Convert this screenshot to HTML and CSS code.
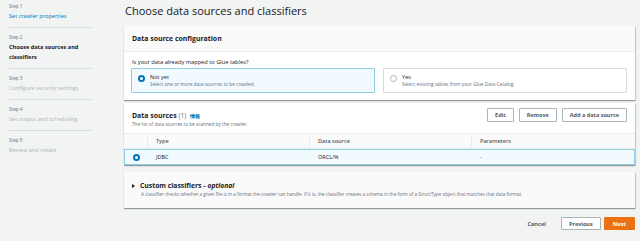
FILE: index.html
```html
<!DOCTYPE html>
<html lang="en">
<head>
  <meta charset="UTF-8" />
  <title>Add crawler | AWS Glue</title>
  <link rel="stylesheet" href="styles.css">
</head>
<body>
  <div class="page">
    <nav class="steps">
      <div class="step first">
        <div class="step-label">Step 1</div>
        <a class="step-name link" href="#">Set crawler properties</a>
      </div>
      <div class="step">
        <div class="step-label">Step 2</div>
        <div class="step-name current">Choose data sources and classifiers</div>
      </div>
      <div class="step">
        <div class="step-label">Step 3</div>
        <div class="step-name">Configure security settings</div>
      </div>
      <div class="step">
        <div class="step-label">Step 4</div>
        <div class="step-name">Set output and scheduling</div>
      </div>
      <div class="step last">
        <div class="step-label">Step 5</div>
        <div class="step-name">Review and create</div>
      </div>
    </nav>

    <main class="content">
      <h1>Choose data sources and classifiers</h1>

      <section class="card">
        <div class="card-header">
          <h2>Data source configuration</h2>
        </div>
        <div class="card-body">
          <div class="field-label">Is your data already mapped to Glue tables?</div>
          <div class="tiles">
            <div class="tile selected">
              <span class="radio on"></span>
              <div>
                <div class="tile-title">Not yet</div>
                <div class="tile-desc">Select one or more data sources to be crawled.</div>
              </div>
            </div>
            <div class="tile">
              <span class="radio"></span>
              <div>
                <div class="tile-title">Yes</div>
                <div class="tile-desc">Select existing tables from your Glue Data Catalog.</div>
              </div>
            </div>
          </div>
        </div>
      </section>

      <section class="card">
        <div class="card-header table-head">
          <div>
            <h2>Data sources <span class="count">(1)</span> <a class="info" href="#">情報</a></h2>
            <div class="header-desc">The list of data sources to be scanned by the crawler.</div>
          </div>
          <div class="actions">
            <button class="btn">Edit</button>
            <button class="btn">Remove</button>
            <button class="btn">Add a data source</button>
          </div>
        </div>
        <div class="table">
          <div class="row head">
            <div class="cell sel"></div>
            <div class="cell type">Type</div>
            <div class="cell src">Data source</div>
            <div class="cell params">Parameters</div>
          </div>
          <div class="row picked">
            <div class="cell sel"><span class="radio on"></span></div>
            <div class="cell type">JDBC</div>
            <div class="cell src">ORCL/%</div>
            <div class="cell params">-</div>
          </div>
        </div>
      </section>

      <section class="card expand">
        <div class="expand-title"><span class="caret"></span>Custom classifiers - <em>optional</em></div>
        <div class="expand-desc">A classifier checks whether a given file is in a format the crawler can handle. If it is, the classifier creates a schema in the form of a StructType object that matches that data format.</div>
      </section>

      <div class="footer">
        <a class="cancel" href="#">Cancel</a>
        <button class="btn">Previous</button>
        <button class="btn primary">Next</button>
      </div>
    </main>
  </div>
</body>
</html>
```

FILE: styles.css
```css
body {
  margin: 0;
  background-color: #f2f3f3;
  font-family: "Open Sans", "Noto Sans", sans-serif;
  color: #16191f;
}

.page {
  display: flex;
  height: 241px;
}

.steps {
  width: 117px;
  flex-shrink: 0;
  padding-left: 9px;
  box-sizing: border-box;
}

.step {
  width: 82px;
  padding: 6px 0 6px;
  border-bottom: 1px solid #d5dbdb;
}

.step.first {
  padding-top: 3px;
}

.step.last {
  border-bottom: none;
}

.step-label {
  font-size: 4.6px;
  line-height: 6px;
  color: #687078;
}

.step-name {
  display: block;
  margin-top: 2px;
  font-size: 5.6px;
  line-height: 10px;
  color: #aab7b8;
  text-decoration: none;
}

.step-name.link {
  color: #0073bb;
}

.step-name.current {
  color: #16191f;
  font-weight: bold;
}

.content {
  flex: 1;
  padding: 0 5px 0 7px;
}

h1 {
  margin: 0;
  padding: 3px 0 0 1px;
  height: 23px;
  font-size: 11px;
  font-weight: normal;
  line-height: 16px;
}

.card {
  background-color: #ffffff;
  box-shadow: 0 1px 1px 0 rgba(0, 28, 36, 0.3), 1px 1px 1px 0 rgba(0, 28, 36, 0.15);
  margin-bottom: 3px;
}

.card-header {
  background-color: #fafafa;
  border-bottom: 1px solid #eaeded;
  padding: 9px 8px 0;
  height: 16px;
}

h2 {
  margin: 0;
  font-size: 6.9px;
  line-height: 8px;
  font-weight: bold;
}

.card-body {
  padding: 6px 8px 7px 7px;
}

.field-label {
  font-size: 5.7px;
  line-height: 9px;
  margin-left: 1px;
}

.tiles {
  display: flex;
  gap: 8px;
  margin-top: 1px;
}

.tile {
  flex: 1;
  display: flex;
  gap: 5px;
  height: 25px;
  box-sizing: border-box;
  padding: 5px 6px;
  border: 1px solid #d5dbdb;
  border-radius: 1px;
}

.tile.selected {
  background-color: #f1faff;
  border-color: #8fcde0;
}

.radio {
  flex-shrink: 0;
  width: 5px;
  height: 5px;
  margin-top: 1px;
  border: 1px solid #aab7b8;
  border-radius: 50%;
  background-color: #ffffff;
  box-sizing: content-box;
}

.radio.on {
  background-color: #ffffff;
  border: 2px solid #0073bb;
  width: 3px;
  height: 3px;
}

.tile-title {
  font-size: 5.6px;
  line-height: 7px;
}

.tile-desc {
  font-size: 4.8px;
  line-height: 7px;
  color: #687078;
}

.table-head {
  display: flex;
  justify-content: space-between;
  background-color: #ffffff;
  border-bottom: none;
  height: 25px;
  padding: 5px 8px 0 8px;
}

.table-head h2 {
  margin-top: 4px;
}

.count {
  font-weight: normal;
  color: #687078;
}

.info {
  font-size: 4.6px;
  color: #0073bb;
  text-decoration: none;
  margin-left: 2px;
}

.header-desc {
  font-size: 4.7px;
  line-height: 8px;
  color: #687078;
}

.actions {
  display: flex;
  gap: 5px;
}

.btn {
  height: 14px;
  padding: 0 7px;
  font-family: inherit;
  font-size: 5.5px;
  font-weight: bold;
  color: #545b64;
  background-color: #ffffff;
  border: 1px solid #aab7b8;
  border-radius: 1px;
  cursor: pointer;
}

.row {
  display: flex;
  align-items: center;
  font-size: 5.5px;
}

.row.head {
  height: 14px;
  background-color: #fafafa;
  border-top: 1px solid #eaeded;
  border-bottom: 1px solid #eaeded;
  color: #545b64;
  font-weight: 600;
}

.row.head .cell + .cell {
  border-left: 1px solid #eaeded;
}

.row.picked {
  height: 16px;
  box-sizing: border-box;
  background-color: #f1faff;
  border: 1px solid #8fcde0;
  margin-bottom: 3px;
}

.cell {
  padding-left: 8px;
  box-sizing: border-box;
  height: 100%;
  display: flex;
  align-items: center;
}

.cell.sel {
  width: 23px;
  padding-left: 8px;
}

.cell.type {
  width: 162px;
}

.cell.src {
  width: 162px;
}

.cell.params {
  flex: 1;
}

.expand {
  margin-top: 7px;
  padding: 9px 8px 8px;
  height: 19px;
  background-color: #fafafa;
}

.expand-title {
  font-size: 6.8px;
  line-height: 9px;
  font-weight: bold;
  display: flex;
  align-items: center;
}

.caret {
  width: 0;
  height: 0;
  border-left: 3px solid #16191f;
  border-top: 2px solid transparent;
  border-bottom: 2px solid transparent;
  margin-right: 5px;
}

.expand-title em {
  margin-left: 2px;
}

.expand-desc {
  margin-left: 9px;
  font-size: 4.6px;
  line-height: 8px;
  color: #687078;
  white-space: nowrap;
}

.footer {
  display: flex;
  justify-content: flex-end;
  align-items: center;
  gap: 3px;
  margin-top: 9px;
}

.cancel {
  font-size: 5.6px;
  font-weight: bold;
  color: #545b64;
  text-decoration: none;
  margin-right: 12px;
}

.footer .btn {
  height: 13px;
  padding: 0 7px;
}

.btn.primary {
  background-color: #ec7211;
  border-color: #ec7211;
  color: #ffffff;
  padding: 0 8px;
}
```
